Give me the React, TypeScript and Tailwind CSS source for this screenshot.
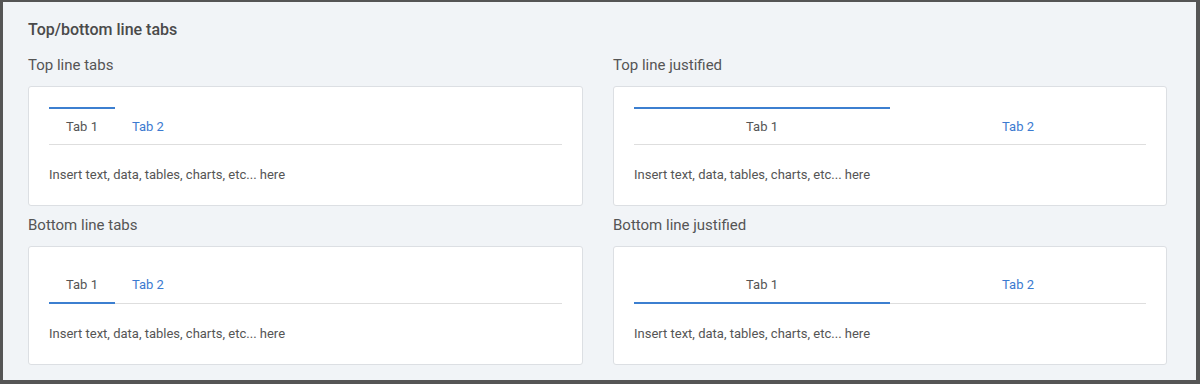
import React from "react";

type Variant = "top" | "bottom";

function TabCard({ variant, justified }: { variant: Variant; justified?: boolean }) {
  const tabs = ["Tab 1", "Tab 2"];
  return (
    <div className="rounded-[3px] border border-[#dcdfe3] bg-white px-5 pt-5">
      <div className="flex border-b border-[#dedede]">
        {tabs.map((t, i) => {
          const active = i === 0;
          const line =
            variant === "top"
              ? active
                ? "border-t-2 border-[#3c7fd0]"
                : "border-t-2 border-transparent"
              : active
                ? "border-b-2 border-[#3c7fd0] -mb-px"
                : "border-b-2 border-transparent -mb-px";
          return (
            <div
              key={t}
              className={`${line} ${justified ? "flex-1" : "px-[17px]"} flex h-[37px] items-center justify-center text-[13px] ${
                active ? "text-[#555]" : "text-[#3b7ad0]"
              }`}
            >
              {t}
            </div>
          );
        })}
      </div>
      <div className="pb-5 pt-5 text-[13px] leading-5 text-[#555]">
        Insert text, data, tables, charts, etc... here
      </div>
    </div>
  );
}

function Section({ title, children }: { title: string; children: React.ReactNode }) {
  return (
    <div className="flex flex-col">
      <div className="mb-[11px] text-[15px] leading-5 text-[#555]">{title}</div>
      {children}
    </div>
  );
}

export default function App() {
  return (
    <div
      className="h-[384px] w-[1200px] border-b-4 border-l-[3px] border-r-4 border-t-2 border-[#555] bg-[#f1f4f7] pl-[25px] pt-[18px]"
      style={{ fontFamily: "Roboto, 'Liberation Sans', sans-serif" }}
    >
      <div className="text-[16px] font-medium leading-5 text-[#4a4a4a]">Top/bottom line tabs</div>
      <div className="mt-[15px] grid grid-cols-[555px_554px] gap-x-[30px] gap-y-[9px]">
        <Section title="Top line tabs">
          <TabCard variant="top" />
        </Section>
        <Section title="Top line justified">
          <TabCard variant="top" justified />
        </Section>
        <Section title="Bottom line tabs">
          <TabCard variant="bottom" />
        </Section>
        <Section title="Bottom line justified">
          <TabCard variant="bottom" justified />
        </Section>
      </div>
    </div>
  );
}
